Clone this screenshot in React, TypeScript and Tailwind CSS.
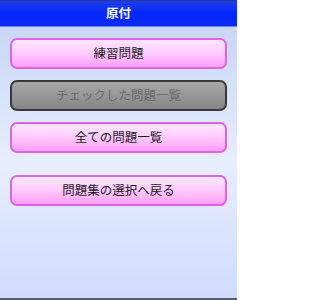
const BTN =
  "h-[31px] w-full rounded-[7px] border-2 text-[12.5px] flex items-center justify-center";

const PINK = `${BTN} border-[#e062e0] bg-linear-to-b from-[#ffe6ff] via-[#ffcaff] to-[#ff9ef8] text-[#1a1a1a]`;
const GRAY = `${BTN} border-[#3a3a3a] bg-linear-to-b from-[#a8a8a8] to-[#858585] text-[#6a6a6a]`;

export default function App() {
  return (
    <div
      className="w-[237px] h-[300px] flex flex-col overflow-hidden"
      style={{ fontFamily: '"Noto Sans CJK JP", "Liberation Sans", sans-serif' }}
    >
      <header className="h-[27px] shrink-0 flex items-center justify-center border-t border-[#2a3a90] border-b border-b-[#6e86f0] bg-linear-to-b from-[#1e3ce8] via-[#0526ff] to-[#0a2cf0] text-white text-[12.5px] font-bold">
        原付
      </header>
      <main className="flex-1 flex flex-col px-[10px] pt-[11px] bg-linear-to-b from-[#c9d6f4] via-[#e6eeff] to-[#d0dbff] border-b-2 border-b-[#5a5e6a]">
        <div className="flex flex-col gap-[11px]">
          <button className={PINK}>練習問題</button>
          <button className={GRAY}>チェックした問題一覧</button>
          <button className={PINK}>全ての問題一覧</button>
        </div>
        <div className="mt-[22px]">
          <button className={PINK}>問題集の選択へ戻る</button>
        </div>
      </main>
    </div>
  );
}
